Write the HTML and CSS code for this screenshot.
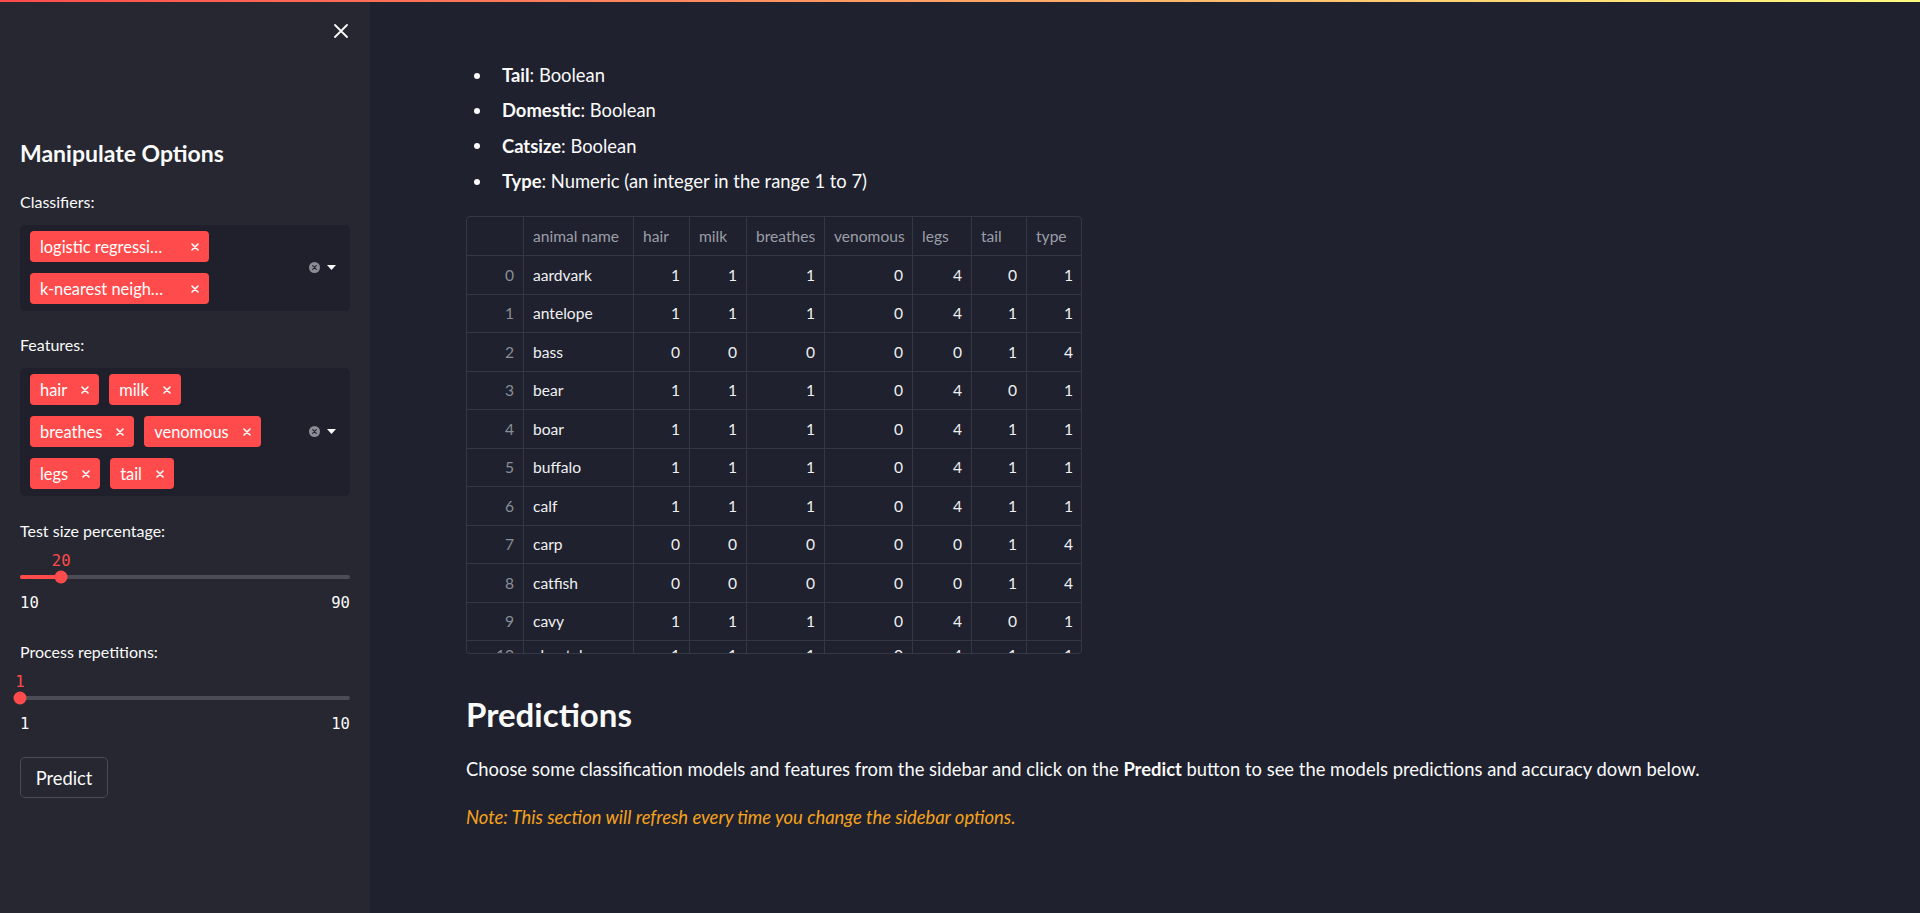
FILE: index.html
```html
<!DOCTYPE html>
<html lang="en">
<head>
<meta charset="utf-8">
<title>Zoo classifiers</title>
<link rel="stylesheet" href="styles.css">
</head>
<body>
<div class="decoration"></div>
<div class="app">
  <aside class="sidebar">
    <div class="sidebar-header">
      <button class="close-btn" aria-label="Close sidebar">
        <svg width="14" height="14" viewBox="0 0 14 14"><path d="M1 1L13 13M13 1L1 13" stroke="#fafafa" stroke-width="1.8" stroke-linecap="round"/></svg>
      </button>
    </div>
    <h3 class="side-title">Manipulate Options</h3>

    <div class="label">Classifiers:</div>
    <div class="multiselect">
      <div class="tags">
        <span class="tag"><span class="tag-text trunc">logistic regression</span><svg class="tag-x wide" width="8" height="8" viewBox="0 0 8 8"><path d="M1 1L7 7M7 1L1 7" stroke="#fff" stroke-width="1.6" stroke-linecap="round"/></svg></span>
        <span class="tag"><span class="tag-text trunc">k-nearest neighbors</span><svg class="tag-x wide" width="8" height="8" viewBox="0 0 8 8"><path d="M1 1L7 7M7 1L1 7" stroke="#fff" stroke-width="1.6" stroke-linecap="round"/></svg></span>
      </div>
      <div class="ms-icons">
        <svg width="11" height="11" viewBox="0 0 11 11"><circle cx="5.5" cy="5.5" r="5.5" fill="#8b8d96"/><path d="M3.7 3.7L7.3 7.3M7.3 3.7L3.7 7.3" stroke="#262730" stroke-width="1.2" stroke-linecap="round"/></svg>
        <svg width="9" height="5" viewBox="0 0 9 5"><path d="M0 0H9L4.5 5Z" fill="#fafafa"/></svg>
      </div>
    </div>

    <div class="label">Features:</div>
    <div class="multiselect">
      <div class="tags">
        <span class="tag"><span class="tag-text">hair</span><svg class="tag-x" width="8" height="8" viewBox="0 0 8 8"><path d="M1 1L7 7M7 1L1 7" stroke="#fff" stroke-width="1.6" stroke-linecap="round"/></svg></span>
        <span class="tag"><span class="tag-text">milk</span><svg class="tag-x" width="8" height="8" viewBox="0 0 8 8"><path d="M1 1L7 7M7 1L1 7" stroke="#fff" stroke-width="1.6" stroke-linecap="round"/></svg></span>
        <span class="tag"><span class="tag-text">breathes</span><svg class="tag-x" width="8" height="8" viewBox="0 0 8 8"><path d="M1 1L7 7M7 1L1 7" stroke="#fff" stroke-width="1.6" stroke-linecap="round"/></svg></span>
        <span class="tag"><span class="tag-text">venomous</span><svg class="tag-x" width="8" height="8" viewBox="0 0 8 8"><path d="M1 1L7 7M7 1L1 7" stroke="#fff" stroke-width="1.6" stroke-linecap="round"/></svg></span>
        <span class="tag"><span class="tag-text">legs</span><svg class="tag-x" width="8" height="8" viewBox="0 0 8 8"><path d="M1 1L7 7M7 1L1 7" stroke="#fff" stroke-width="1.6" stroke-linecap="round"/></svg></span>
        <span class="tag"><span class="tag-text">tail</span><svg class="tag-x" width="8" height="8" viewBox="0 0 8 8"><path d="M1 1L7 7M7 1L1 7" stroke="#fff" stroke-width="1.6" stroke-linecap="round"/></svg></span>
      </div>
      <div class="ms-icons">
        <svg width="11" height="11" viewBox="0 0 11 11"><circle cx="5.5" cy="5.5" r="5.5" fill="#8b8d96"/><path d="M3.7 3.7L7.3 7.3M7.3 3.7L3.7 7.3" stroke="#262730" stroke-width="1.2" stroke-linecap="round"/></svg>
        <svg width="9" height="5" viewBox="0 0 9 5"><path d="M0 0H9L4.5 5Z" fill="#fafafa"/></svg>
      </div>
    </div>

    <div class="label label-slider">Test size percentage:</div>
    <div class="slider">
      <div class="slider-value-row"><span class="slider-value" style="left: 12.5%">20</span></div>
      <div class="track-row">
        <div class="track"><div class="track-fill" style="width: 12.5%"></div><div class="thumb" style="left: 12.5%"></div></div>
      </div>
      <div class="ticks"><span>10</span><span>90</span></div>
    </div>

    <div class="label label-slider2">Process repetitions:</div>
    <div class="slider">
      <div class="slider-value-row"><span class="slider-value" style="left: 0%">1</span></div>
      <div class="track-row">
        <div class="track"><div class="track-fill" style="width: 0%"></div><div class="thumb" style="left: 0%"></div></div>
      </div>
      <div class="ticks"><span>1</span><span>10</span></div>
    </div>

    <button class="predict-btn">Predict</button>
  </aside>

  <main class="main">
    <ul class="bullets">
      <li><b>Tail</b>: Boolean</li>
      <li><b>Domestic</b>: Boolean</li>
      <li><b>Catsize</b>: Boolean</li>
      <li><b>Type</b>: Numeric (an integer in the range 1 to 7)</li>
    </ul>

    <div class="table-wrap">
      <table class="grid">
        <colgroup>
          <col style="width:57px"><col style="width:110px"><col style="width:56px"><col style="width:57px"><col style="width:78px"><col style="width:88px"><col style="width:59px"><col style="width:55px"><col style="width:56px">
        </colgroup>
        <thead>
          <tr><th></th><th>animal name</th><th>hair</th><th>milk</th><th>breathes</th><th>venomous</th><th>legs</th><th>tail</th><th>type</th></tr>
        </thead>
        <tbody>
          <tr><td class="idx">0</td><td class="name">aardvark</td><td>1</td><td>1</td><td>1</td><td>0</td><td>4</td><td>0</td><td>1</td></tr>
          <tr><td class="idx">1</td><td class="name">antelope</td><td>1</td><td>1</td><td>1</td><td>0</td><td>4</td><td>1</td><td>1</td></tr>
          <tr><td class="idx">2</td><td class="name">bass</td><td>0</td><td>0</td><td>0</td><td>0</td><td>0</td><td>1</td><td>4</td></tr>
          <tr><td class="idx">3</td><td class="name">bear</td><td>1</td><td>1</td><td>1</td><td>0</td><td>4</td><td>0</td><td>1</td></tr>
          <tr><td class="idx">4</td><td class="name">boar</td><td>1</td><td>1</td><td>1</td><td>0</td><td>4</td><td>1</td><td>1</td></tr>
          <tr><td class="idx">5</td><td class="name">buffalo</td><td>1</td><td>1</td><td>1</td><td>0</td><td>4</td><td>1</td><td>1</td></tr>
          <tr><td class="idx">6</td><td class="name">calf</td><td>1</td><td>1</td><td>1</td><td>0</td><td>4</td><td>1</td><td>1</td></tr>
          <tr><td class="idx">7</td><td class="name">carp</td><td>0</td><td>0</td><td>0</td><td>0</td><td>0</td><td>1</td><td>4</td></tr>
          <tr><td class="idx">8</td><td class="name">catfish</td><td>0</td><td>0</td><td>0</td><td>0</td><td>0</td><td>1</td><td>4</td></tr>
          <tr><td class="idx">9</td><td class="name">cavy</td><td>1</td><td>1</td><td>1</td><td>0</td><td>4</td><td>0</td><td>1</td></tr>
          <tr class="partial"><td class="idx">10</td><td class="name">cheetah</td><td>1</td><td>1</td><td>1</td><td>0</td><td>4</td><td>1</td><td>1</td></tr>
        </tbody>
      </table>
    </div>

    <h2 class="section-title">Predictions</h2>
    <p class="para">Choose some classification models and features from the sidebar and click on the <b>Predict</b> button to see the models predictions and accuracy down below.</p>
    <p class="note">Note: This section will refresh every time you change the sidebar options.</p>
  </main>
</div>
</body>
</html>
```

FILE: styles.css
```css
html, body {
  margin: 0;
  padding: 0;
  height: 100%;
}
body {
  background: #1f212e;
  color: #fafafa;
  font-family: Lato, "Noto Sans", sans-serif;
  font-size: 18.4px;
  overflow: hidden;
}
.decoration {
  position: fixed;
  top: 0;
  left: 0;
  right: 0;
  height: 2px;
  background: linear-gradient(90deg, #ff4b4b, #fffd80);
  z-index: 10;
}
.app {
  display: flex;
  height: 913px;
}

/* Sidebar */
.sidebar {
  width: 370px;
  flex: 0 0 370px;
  box-sizing: border-box;
  background: #262730;
  padding: 0 20px;
  height: 913px;
}
.sidebar-header {
  height: 62px;
  display: flex;
  justify-content: flex-end;
  align-items: center;
}
.close-btn {
  background: none;
  border: none;
  padding: 0;
  margin-right: 2px;
  width: 14px;
  height: 14px;
  display: flex;
}
.side-title {
  margin: 76px 0 0;
  font-size: 23px;
  line-height: 30px;
  font-weight: 700;
}
.label {
  font-size: 16px;
  line-height: 22px;
  height: 22px;
  margin-top: 23px;
  margin-bottom: 12px;
  color: #fafafa;
}
.multiselect {
  background: #1f202c;
  border-radius: 5px;
  display: flex;
  align-items: center;
  padding: 6px 14px 7px 10px;
}
.tags {
  flex: 1;
  display: flex;
  flex-wrap: wrap;
  align-content: flex-start;
  gap: 11px 10px;
  max-width: 250px;
}
.tag {
  display: inline-flex;
  align-items: center;
  height: 31px;
  padding: 0 10px;
  background: #ff4b4b;
  border-radius: 4px;
  font-size: 16.4px;
  color: #fff;
  box-sizing: border-box;
}
.tag-text {
  white-space: nowrap;
}
.tag-text.trunc {
  width: 126px;
  overflow: hidden;
  text-overflow: ellipsis;
}
.tag-x {
  margin-left: 14px;
}
.tag-x.wide {
  margin-left: 25px;
}
.ms-icons {
  display: flex;
  align-items: center;
  gap: 7px;
  margin-left: auto;
}

.label-slider {
  margin-top: 24px;
  margin-bottom: 0;
}
.label-slider2 {
  margin-top: 29px;
  margin-bottom: 0;
}
.slider {
  padding-top: 10px;
}
.slider-value-row {
  position: relative;
  height: 18px;
}
.slider-value {
  position: absolute;
  top: 0;
  transform: translateX(-50%);
  font-family: "DejaVu Sans Mono", "Liberation Mono", monospace;
  font-size: 15.6px;
  line-height: 18px;
  color: #ff4b4b;
}
.track-row {
  height: 14px;
  display: flex;
  align-items: center;
}
.track {
  position: relative;
  width: 100%;
  height: 4px;
  border-radius: 2px;
  background: #4b4c56;
}
.track-fill {
  height: 4px;
  border-radius: 2px;
  background: #ff4b4b;
}
.thumb {
  position: absolute;
  top: 50%;
  width: 13px;
  height: 13px;
  border-radius: 50%;
  background: #ff4b4b;
  transform: translate(-50%, -50%);
}
.ticks {
  margin-top: 10px;
  height: 18px;
  display: flex;
  justify-content: space-between;
  font-family: "DejaVu Sans Mono", "Liberation Mono", monospace;
  font-size: 15.6px;
  line-height: 18px;
  color: #fafafa;
}
.predict-btn {
  margin-top: 24px;
  width: 88px;
  height: 41px;
  box-sizing: border-box;
  background: #262730;
  border: 1px solid #4a4b55;
  border-radius: 5px;
  color: #fafafa;
  font-family: Lato, "Noto Sans", sans-serif;
  font-size: 18.3px;
  padding: 0;
}

/* Main */
.main {
  flex: 1;
  padding: 58px 96px 0 96px;
  box-sizing: border-box;
}
.bullets {
  list-style: none;
  margin: 0;
  padding: 0 0 0 36px;
}
.bullets li {
  position: relative;
  line-height: 35.3px;
  height: 35.3px;
}
.bullets li::before {
  content: "";
  position: absolute;
  left: -28px;
  top: 50%;
  width: 6px;
  height: 6px;
  margin-top: -3px;
  border-radius: 50%;
  background: #fafafa;
}
.bullets b {
  font-weight: 700;
}
.table-wrap {
  margin-top: 17px;
  width: 616px;
  height: 438px;
  box-sizing: border-box;
  border: 1px solid #353743;
  border-radius: 4px;
  overflow: hidden;
}
.grid {
  border-collapse: collapse;
  table-layout: fixed;
  width: 616px;
  margin: -1px 0 0 -1px;
  font-size: 15.6px;
}
.grid th, .grid td {
  border: 1px solid #353743;
  padding: 0 9px;
  white-space: nowrap;
  overflow: hidden;
}
.grid th {
  height: 38px;
  font-weight: 400;
  text-align: left;
  color: #9c9ea7;
}
.grid td {
  height: 37.5px;
  text-align: right;
  color: #f0f0f2;
}
.grid tr.partial td {
  vertical-align: top;
  padding-top: 5px;
}
.grid td.idx {
  color: #8b8d96;
}
.grid td.name {
  text-align: left;
}
.section-title {
  margin: 41px 0 0;
  font-size: 33px;
  line-height: 38px;
  font-weight: 700;
}
.para {
  margin: 22px 0 0;
  line-height: 28px;
}
.para b {
  font-weight: 700;
}
.note {
  margin: 20px 0 0;
  line-height: 28px;
  font-style: italic;
  color: #f5a11c;
}
```
